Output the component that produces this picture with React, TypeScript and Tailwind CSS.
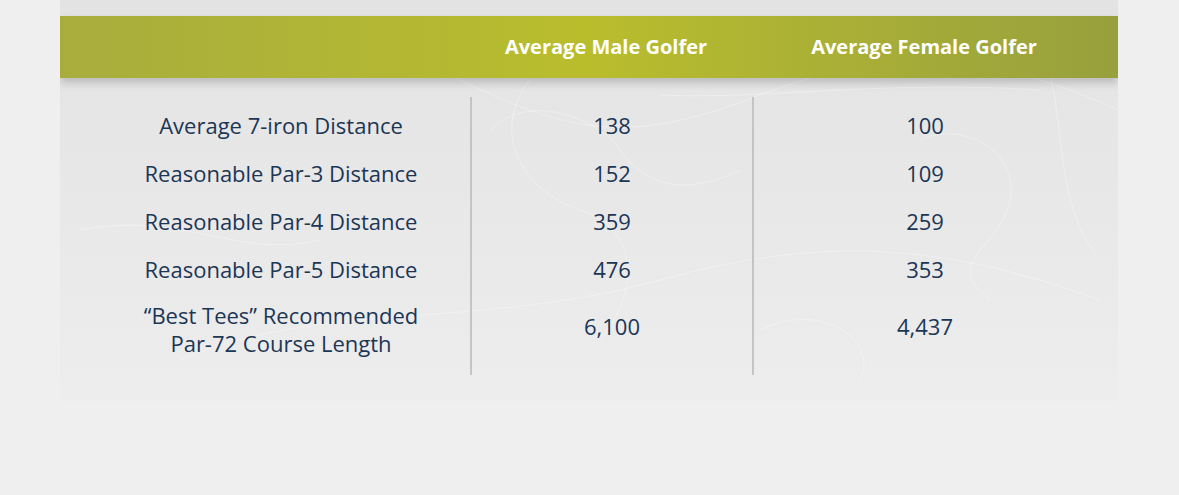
import React from 'react';

const rows = [
  { label: ['Average 7-iron Distance'], male: '138', female: '100' },
  { label: ['Reasonable Par-3 Distance'], male: '152', female: '109' },
  { label: ['Reasonable Par-4 Distance'], male: '359', female: '259' },
  { label: ['Reasonable Par-5 Distance'], male: '476', female: '353' },
  { label: ['\u201cBest Tees\u201d Recommended', 'Par-72 Course Length'], male: '6,100', female: '4,437' },
];

const App = () => {
  return (
    <div className="min-h-screen bg-[#efefef] font-['Open_Sans','Noto_Sans',sans-serif] text-[#1c3655]">
      <div className="relative ml-[60px] w-[1058px] h-[401px] overflow-hidden bg-gradient-to-b from-[#e3e3e3] via-[#e8e8e8] to-[#ededed]">
        {/* faint contour texture */}
        <svg className="absolute inset-0 h-full w-full" viewBox="0 0 1058 401" fill="none" stroke="#ffffff" strokeOpacity="0.35" strokeWidth="0.9">
          <path d="M40 20 C 160 60, 260 10, 380 70 S 560 150, 700 95 S 950 60, 1058 110" />
          <path d="M430 130 C 470 90, 540 120, 560 150 S 620 200, 680 170" />
          <path d="M470 80 C 430 130, 460 190, 520 210 S 580 290, 540 340" />
          <path d="M600 95 C 700 100, 820 80, 980 90" />
          <path d="M860 140 C 900 120, 960 150, 950 200 S 880 260, 930 300" />
          <path d="M120 360 C 260 300, 420 330, 600 280 S 900 250, 1040 300" />
          <path d="M20 230 C 120 210, 180 260, 260 240" />
          <path d="M700 330 C 760 300, 820 340, 800 380" />
          <path d="M980 40 C 1010 120, 990 200, 1040 260" />
        </svg>

        <div className="relative mt-4 grid h-[62px] grid-cols-[410px_282px_366px] items-center bg-gradient-to-r from-[#a8ad3d] via-[#b9bd2c] to-[#98a03d] shadow-[0_5px_8px_rgba(0,0,0,0.18)]">
          <div />
          <div className="pr-[10px] text-center text-[20px] font-bold text-white">Average Male Golfer</div>
          <div className="pr-[22px] text-center text-[20px] font-bold text-white">Average Female Golfer</div>
        </div>

        <div className="relative mt-[19px] grid h-[278px] grid-cols-[410px_282px_366px] text-[22px]">
          <div className="flex flex-col pt-1 pl-8">
            {rows.map((r, i) => (
              <div
                key={i}
                className={`flex flex-col items-center justify-center text-center leading-[28px] ${i === 4 ? 'h-[72px]' : 'h-12'}`}
              >
                {r.label.map((l) => (
                  <span key={l}>{l}</span>
                ))}
              </div>
            ))}
          </div>
          <div className="flex flex-col border-l-2 border-[#c4c4c4] pt-1">
            {rows.map((r, i) => (
              <div key={i} className={`flex items-center justify-center ${i === 4 ? 'h-[66px]' : 'h-12'}`}>
                {r.male}
              </div>
            ))}
          </div>
          <div className="flex flex-col border-l-2 border-[#c4c4c4] pt-1 pr-[22px]">
            {rows.map((r, i) => (
              <div key={i} className={`flex items-center justify-center ${i === 4 ? 'h-[66px]' : 'h-12'}`}>
                {r.female}
              </div>
            ))}
          </div>
        </div>
      </div>
    </div>
  );
};

export default App;
